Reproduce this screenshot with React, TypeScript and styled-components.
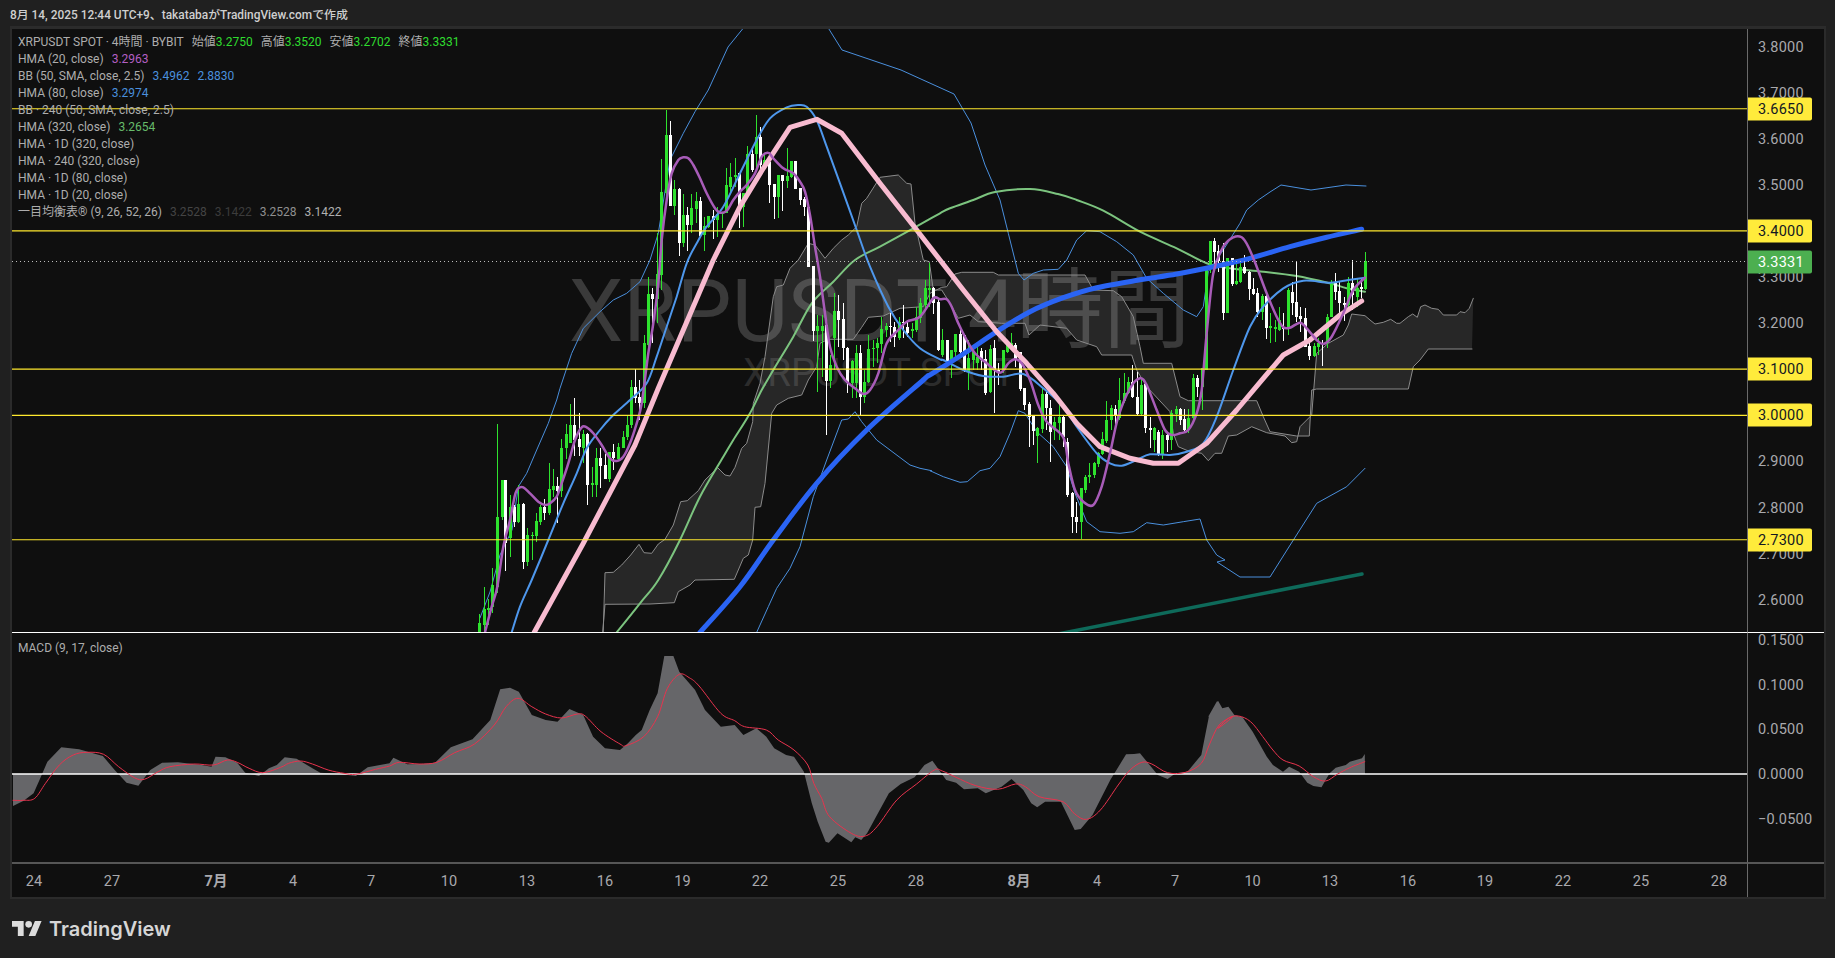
import styled, { createGlobalStyle } from "styled-components";

type Pt = [number, number];

const FONT = `Roboto, "Noto Sans CJK JP", sans-serif`;

const GlobalStyle = createGlobalStyle`
  html, body {
    margin: 0;
    padding: 0;
    background: #202020;
    font-family: ${FONT};
  }
`;

// traced off crops of the chart, so each block is in its crop's coordinates
const trace = (ox: number, oy: number, flat: number[], sx = 3, sy = 3): Pt[] => {
  const out: Pt[] = [];
  for (let i = 0; i < flat.length; i += 2) out.push([ox + flat[i] / sx, oy + flat[i + 1] / sy]);
  return out;
};
const A = (f: number[]) => trace(440, 380, f); // lower left crop
const B = (f: number[]) => trace(440, 90, f); // upper left crop
const C = (f: number[]) => trace(930, 200, f); // right crop
const D = (f: number[]) => trace(1340, 270, f); // cloud tail
const M1 = (f: number[]) => trace(0, 630, f, 2.529);
const M2 = (f: number[]) => trace(620, 630, f, 2.529);
const M3 = (f: number[]) => trace(1200, 600, f, 2.469);

const toPoints = (pts: Pt[]) => pts.map(([x, y]) => `${x.toFixed(1)},${y.toFixed(1)}`).join(" ");

// catmull-rom through the traced points
const toCurve = (pts: Pt[]) => {
  let d = `M${pts[0][0].toFixed(1)} ${pts[0][1].toFixed(1)}`;
  for (let i = 0; i < pts.length - 1; i++) {
    const p0 = pts[Math.max(i - 1, 0)];
    const p1 = pts[i];
    const p2 = pts[i + 1];
    const p3 = pts[Math.min(i + 2, pts.length - 1)];
    const c1x = p1[0] + (p2[0] - p0[0]) / 6;
    const c1y = p1[1] + (p2[1] - p0[1]) / 6;
    const c2x = p2[0] - (p3[0] - p1[0]) / 6;
    const c2y = p2[1] - (p3[1] - p1[1]) / 6;
    d += `C${c1x.toFixed(1)} ${c1y.toFixed(1)} ${c2x.toFixed(1)} ${c2y.toFixed(1)} ${p2[0].toFixed(1)} ${p2[1].toFixed(1)}`;
  }
  return d;
};

const priceY = (p: number) => 46.5 + (3.8 - p) * 461;
const macdY = (v: number) => 774 - v * 892;

const cloudUpper: Pt[] = [
  ...A([495, 578, 520, 577, 545, 555, 572, 525, 597, 493, 612, 518, 635, 520, 655, 492, 675, 478, 700, 435, 722, 365, 742, 362, 775, 332, 795, 300, 833, 263, 855, 285, 870, 288, 885, 262, 905, 205, 920, 190, 938, 125, 940, 70]),
  ...B([960, 880, 975, 800, 1000, 620, 1010, 590, 1030, 585, 1050, 535, 1075, 510, 1105, 460, 1125, 465, 1155, 505, 1180, 475, 1205, 450, 1225, 435, 1250, 410, 1265, 340, 1280, 325, 1320, 262, 1375, 255, 1400, 280, 1413, 282, 1425, 400, 1450, 510, 1468, 515]),
  ...C([0, 200, 10, 270, 35, 270, 60, 310, 85, 355, 120, 345, 145, 365, 215, 370, 285, 370, 297, 405, 330, 375, 410, 385, 440, 420, 500, 440, 515, 465, 605, 465, 620, 510, 650, 560, 720, 635, 730, 700, 745, 740, 780, 755, 815, 760, 835, 782, 855, 760, 875, 760, 895, 708, 920, 705, 965, 680, 1010, 698, 1065, 708, 1085, 728, 1100, 725, 1110, 680, 1145, 645, 1160, 460, 1195, 430, 1240, 405]),
  ...D([25, 165, 35, 132, 75, 137, 90, 150, 105, 162, 130, 157, 152, 148, 170, 160, 180, 160, 205, 140, 218, 132, 232, 142, 242, 110, 255, 105, 275, 115, 295, 118, 310, 135, 350, 135, 360, 125, 375, 128, 388, 115, 400, 85]),
];

const cloudLower: Pt[] = [
  ...A([495, 673, 630, 672, 703, 668, 715, 635, 750, 615, 765, 600, 883, 598, 910, 535, 925, 525, 938, 480, 945, 382, 962, 380, 975, 310, 995, 100, 1010, 75, 1045, 55, 1085, 45, 1105, 0]),
  ...B([1130, 830, 1140, 760, 1165, 748, 1240, 748, 1265, 712, 1285, 682, 1330, 678, 1380, 655, 1450, 650, 1470, 610]),
  ...C([35, 262, 50, 260, 75, 222, 95, 217, 190, 217, 205, 225, 465, 225, 490, 270, 550, 272, 575, 290, 610, 350, 630, 440, 640, 490, 725, 490, 750, 590, 775, 602, 980, 602, 1000, 650, 1020, 695, 1100, 708, 1138, 708, 1145, 570, 1160, 567, 1435, 567, 1450, 500, 1470, 480, 1495, 447, 1626, 447]),
];

const hma20: Pt[] = [
  ...A([135, 757, 155, 680, 172, 620, 190, 500, 210, 420, 225, 345, 235, 325, 250, 322, 270, 340, 295, 365, 315, 375, 330, 370, 350, 350, 365, 310, 385, 250, 405, 180, 425, 142, 440, 142, 460, 160, 485, 195, 510, 235, 530, 243, 550, 230, 570, 190, 590, 130, 605, 70]),
  ...B([625, 790, 640, 700, 655, 580, 665, 450, 680, 330, 695, 250, 715, 210, 730, 202, 745, 205, 760, 225, 780, 265, 800, 310, 825, 355, 840, 368, 860, 362, 880, 330, 900, 305, 920, 285, 945, 250, 965, 200, 985, 188, 1000, 205, 1030, 235, 1060, 250, 1080, 275, 1095, 305, 1110, 375, 1125, 470, 1140, 560, 1155, 670, 1170, 770, 1190, 830, 1215, 870, 1245, 895, 1270, 912, 1290, 900, 1315, 850, 1340, 760, 1375, 720, 1400, 695, 1440, 680, 1480, 625]),
  ...C([30, 298, 50, 298, 65, 320, 85, 370, 110, 420, 135, 460, 170, 490, 210, 518, 235, 490, 255, 478, 275, 490, 300, 540, 325, 615, 350, 665, 400, 712, 415, 790, 435, 870, 460, 905, 490, 915, 515, 860, 540, 760, 565, 650, 600, 565, 630, 535, 650, 555, 680, 630, 705, 690, 725, 705, 750, 700, 775, 690, 800, 640, 815, 570, 830, 400, 850, 220, 880, 140, 910, 112, 935, 112, 955, 140, 980, 200, 1010, 280, 1040, 350, 1060, 382, 1080, 383, 1110, 368, 1130, 385, 1160, 420, 1180, 432, 1205, 410, 1240, 340, 1270, 270, 1305, 233]),
];

const hma80: Pt[] = [
  ...A([215, 757, 240, 680, 275, 600, 325, 480, 370, 370, 410, 280, 440, 205, 480, 150, 520, 105, 570, 60]),
  ...B([620, 880, 650, 800, 680, 710, 710, 620, 740, 520, 770, 460, 800, 410, 850, 350, 900, 250, 950, 150, 990, 85, 1040, 52, 1075, 45, 1100, 50, 1130, 90, 1160, 170, 1200, 280, 1250, 420, 1290, 530, 1345, 650, 1390, 720, 1440, 775, 1500, 808]),
  ...C([40, 480, 100, 510, 160, 528, 220, 530, 280, 522, 340, 565, 400, 620, 440, 680, 500, 760, 540, 790, 575, 797, 620, 780, 660, 763, 720, 765, 770, 755, 820, 730, 860, 650, 910, 510, 960, 380, 1000, 320, 1060, 265, 1120, 242, 1200, 248, 1255, 240, 1305, 233]),
];

const hma320: Pt[] = [
  ...A([530, 757, 600, 670, 655, 600, 720, 480, 780, 350, 850, 230, 880, 180, 930, 100]),
  ...B([965, 900, 1000, 840, 1060, 740, 1115, 640, 1180, 575, 1245, 510, 1320, 470, 1420, 415, 1500, 370]),
  ...C([60, 25, 130, 0]),
  [995, 192], [1030, 189], [1058, 194],
  ...C([440, 0, 520, 32, 630, 95, 740, 145, 830, 190, 900, 205, 1000, 215, 1100, 228, 1200, 250, 1250, 265, 1305, 275]),
];

const dailyBlue: Pt[] = [
  ...A([780, 757, 900, 620, 1000, 480, 1130, 310, 1280, 150, 1450, 0]),
  ...C([0, 525, 100, 462, 200, 395, 300, 335, 400, 293, 500, 263, 640, 238, 740, 222, 850, 200, 960, 175, 1080, 140, 1190, 112, 1295, 88]),
];

const dailyPink: Pt[] = [
  ...A([283, 757, 430, 490, 585, 195]),
  ...B([655, 895, 820, 510, 900, 350, 970, 235, 1050, 112, 1130, 88, 1205, 130, 1320, 280, 1430, 420]),
  ...C([30, 180, 100, 270, 200, 395, 290, 490, 370, 580, 440, 670, 510, 740, 600, 775, 670, 790, 745, 790, 830, 730, 920, 630, 1000, 535, 1060, 465, 1140, 420, 1230, 345, 1295, 303]),
];

const bandUpper: Pt[] = [
  [480, 618], [490, 592], [500, 555], [512, 530],
  ...A([235, 320, 260, 280, 290, 210, 325, 130, 350, 60]),
  ...B([360, 895, 395, 790, 430, 715, 480, 665, 520, 630, 560, 610, 600, 575, 630, 510, 655, 430, 690, 210, 730, 130, 765, 65, 805, 0]),
  [728, 47], [745, 26],
];

const bandUpperRight: Pt[] = [
  [827, 26], [842, 50], [901, 70], [954, 94], [971, 123], [985, 165],
  ...C([210, 0, 235, 100, 265, 220, 282, 240, 310, 220, 340, 210, 385, 208, 410, 180, 440, 120, 470, 92, 510, 95, 560, 125, 610, 165, 650, 235, 700, 280, 760, 330, 800, 350, 820, 320, 835, 215, 880, 150, 930, 70, 950, 30, 985, 0]),
  [1270, 192], [1281, 185], [1311, 190], [1346, 185], [1366, 186],
];

const bandLower: Pt[] = [
  ...A([950, 757, 985, 680, 1010, 625, 1050, 565, 1080, 500, 1120, 350, 1160, 240, 1205, 120, 1225, 117, 1245, 95, 1265, 125, 1310, 180, 1350, 210, 1410, 255, 1440, 265, 1475, 272]),
  ...C([0, 812, 40, 830, 90, 847, 112, 845, 150, 812, 180, 805, 210, 770, 240, 700, 265, 632, 285, 640, 320, 695, 370, 740, 410, 800, 435, 880, 470, 965, 510, 995, 570, 1000, 610, 995, 650, 968, 700, 975, 760, 965, 810, 957, 830, 1020, 860, 1065, 885, 1080]),
  [1217, 562], [1240, 577], [1270, 577], [1287, 550],
  ...C([1160, 910, 1250, 860, 1305, 805]),
];

const macdArea: Pt[] = [
  ...M1([33, 528, 60, 512, 85, 490, 100, 450, 120, 395, 155, 352, 200, 358, 260, 378, 290, 420, 320, 458, 350, 467, 380, 420, 410, 398, 450, 397, 510, 405, 535, 410, 545, 380, 570, 382, 600, 398, 620, 428, 655, 438, 680, 415, 700, 405, 720, 382, 750, 386, 790, 415, 810, 428, 860, 432, 900, 438, 930, 412, 985, 400, 995, 383, 1030, 403, 1065, 402, 1100, 398, 1140, 352, 1195, 328, 1240, 270, 1265, 178, 1290, 173, 1312, 185, 1345, 255, 1380, 270, 1410, 275, 1440, 237, 1475, 255, 1500, 320, 1530, 355, 1568, 360]),
  ...M2([20, 340, 40, 315, 55, 300, 75, 240, 95, 190, 112, 78, 135, 78, 150, 125, 190, 180, 215, 240, 255, 290, 290, 285, 312, 315, 345, 295, 370, 320, 390, 355, 420, 375, 440, 380, 465, 425, 485, 520, 500, 575, 520, 635, 528, 638, 550, 610, 585, 637, 595, 622, 610, 630, 625, 610, 650, 555, 680, 490, 710, 462, 745, 442, 770, 405, 790, 392, 825, 450, 850, 458, 870, 478, 905, 475, 925, 490, 965, 470, 990, 447, 1020, 480, 1040, 520, 1055, 532, 1075, 515, 1115, 515, 1150, 600, 1165, 597, 1195, 555, 1240, 450, 1280, 373, 1300, 372, 1315, 370, 1360, 435, 1385, 447, 1405, 430, 1435, 425, 1470, 375, 1490, 255, 1510, 213, 1525, 238]),
  ...M3([20, 350, 45, 303, 55, 325, 70, 320, 85, 345, 105, 352, 130, 395, 165, 470, 180, 495, 205, 515, 220, 500, 245, 515, 265, 548, 280, 558, 300, 562, 320, 520, 335, 503, 360, 495, 370, 485, 400, 475, 407, 462]),
];

const macdSignal: Pt[] = [
  ...M1([33, 511, 60, 511, 88, 505, 115, 460, 150, 405, 185, 375, 220, 367, 262, 373, 300, 410, 340, 443, 365, 448, 400, 425, 430, 410, 490, 402, 540, 405, 575, 390, 600, 397, 630, 415, 665, 428, 710, 412, 730, 400, 760, 393, 790, 402, 830, 420, 870, 430, 900, 433, 950, 418, 985, 408, 1010, 397, 1060, 402, 1105, 397, 1150, 368, 1200, 342, 1250, 285, 1280, 230, 1310, 205, 1345, 230, 1380, 252, 1420, 264, 1460, 252, 1480, 258, 1520, 305, 1568, 342]),
  ...M2([15, 347, 60, 320, 95, 260, 120, 175, 150, 133, 175, 143, 200, 168, 255, 250, 290, 272, 315, 290, 370, 300, 400, 330, 440, 360, 475, 405, 490, 460, 510, 505, 530, 560, 585, 610, 620, 618, 650, 590, 700, 510, 750, 462, 795, 420, 815, 423, 850, 442, 900, 467, 955, 478, 1000, 462, 1025, 470, 1060, 500, 1120, 515, 1150, 552, 1180, 568, 1215, 540, 1260, 465, 1290, 420, 1320, 397, 1345, 402, 1385, 428, 1430, 427, 1470, 400, 1490, 345, 1515, 285, 1550, 260]),
  ...M3([45, 385, 70, 355, 95, 348, 125, 365, 155, 410, 180, 450, 205, 480, 245, 498, 280, 530, 310, 543, 340, 522, 370, 503, 407, 485]),
];

const G = 1;
const W = 0;

// x, wick top, body top, body bottom, wick bottom, up
const candlesA = [
  [118, 702, 730, 770, 770, G], [133, 622, 688, 735, 770, G], [145, 657, 685, 690, 735, G], [157, 565, 615, 680, 700, G],
  [172, 132, 412, 620, 640, G], [185, 300, 300, 412, 420, G], [196, 300, 300, 490, 572, W], [210, 345, 380, 475, 530, G],
  [222, 375, 380, 425, 440, W], [235, 316, 372, 425, 430, G], [250, 370, 372, 545, 568, W], [262, 445, 465, 545, 557, G],
  [275, 455, 466, 469, 540, G], [288, 400, 423, 468, 485, G], [301, 375, 381, 425, 435, G], [313, 358, 381, 398, 420, W],
  [328, 250, 328, 398, 405, G], [340, 268, 318, 330, 352, G], [352, 292, 318, 332, 430, W], [364, 178, 205, 332, 350, G],
  [378, 133, 162, 205, 238, G], [390, 72, 135, 190, 190, G], [403, 55, 135, 180, 228, W], [417, 100, 178, 202, 228, W],
  [430, 150, 162, 205, 250, G], [442, 160, 162, 315, 375, W], [457, 262, 310, 315, 350, G], [468, 205, 235, 315, 350, G],
  [481, 205, 235, 258, 323, W], [496, 222, 255, 298, 298, W], [508, 215, 215, 298, 305, G], [520, 192, 215, 235, 270, W],
  [535, 190, 200, 238, 240, G], [548, 153, 170, 205, 205, G], [560, 105, 135, 172, 180, G], [574, 0, 22, 135, 145, G],
  [586, -32, 22, 55, 70, W], [598, 0, 52, 70, 120, W], [612, -135, -110, 70, 85, G],
];

const candlesB = [
  [625, 562, 612, 765, 780, G], [637, 595, 612, 628, 760, W], [652, 430, 552, 628, 700, G], [664, 208, 305, 555, 600, G],
  [677, 60, 135, 310, 330, G], [689, 92, 135, 347, 347, W], [703, 270, 298, 347, 375, G], [716, 295, 298, 458, 497, W],
  [728, 312, 375, 458, 470, G], [742, 350, 375, 405, 482, W], [754, 312, 353, 405, 430, G], [767, 305, 333, 358, 400, G],
  [780, 322, 333, 437, 437, W], [793, 380, 408, 435, 483, G], [805, 378, 378, 412, 415, G], [820, 360, 378, 390, 447, W],
  [832, 350, 372, 390, 440, G], [845, 365, 370, 373, 415, G], [858, 235, 285, 368, 370, G], [871, 220, 260, 290, 308, G],
  [884, 205, 255, 262, 290, G], [898, 250, 250, 350, 415, W], [910, 310, 310, 350, 412, G], [922, 168, 192, 315, 320, G],
  [937, 178, 192, 240, 245, W], [948, 75, 140, 192, 235, G], [960, 110, 140, 225, 240, W], [973, 190, 210, 225, 240, G],
  [987, 190, 215, 285, 338, W], [1001, 282, 282, 320, 388, W], [1013, 255, 255, 320, 385, G], [1027, 255, 255, 272, 362, W],
  [1040, 175, 258, 272, 295, G], [1052, 212, 212, 262, 265, G], [1066, 212, 212, 297, 297, W], [1079, 295, 295, 330, 345, W],
  [1091, 320, 328, 352, 378, W], [1105, 350, 350, 530, 530, W], [1118, 528, 528, 722, 752, W], [1131, 675, 708, 722, 906, G],
  [1145, 675, 708, 722, 860, G], [1157, 700, 705, 872, 1034, W], [1170, 795, 825, 872, 895, G], [1183, 610, 662, 745, 840, G],
  [1195, 615, 662, 690, 770, W], [1208, 640, 688, 775, 810, W], [1222, 770, 775, 880, 910, W], [1235, 810, 812, 880, 923, G],
  [1247, 765, 790, 880, 925, G], [1261, 765, 790, 920, 975, W], [1273, 840, 875, 922, 938, G], [1285, 735, 778, 875, 880, G],
  [1298, 750, 773, 778, 830, G], [1310, 745, 760, 775, 820, G], [1324, 680, 717, 762, 790, G], [1337, 700, 708, 720, 740, G],
  [1351, 670, 708, 710, 755, W], [1363, 695, 710, 740, 770, W], [1376, 680, 695, 745, 750, G], [1389, 645, 695, 700, 745, W],
  [1402, 690, 710, 730, 740, W], [1415, 700, 718, 722, 745, G], [1428, 650, 680, 720, 725, G], [1441, 625, 640, 685, 700, G],
  [1454, 570, 595, 645, 660, G], [1467, 520, 595, 600, 650, G], [1480, 592, 595, 640, 672, W], [1493, 630, 635, 780, 782, W],
];

const candlesC = [
  [37, 388, 420, 465, 470, G], [50, 420, 420, 490, 495, W], [63, 450, 450, 490, 535, G], [76, 402, 402, 455, 480, G],
  [89, 388, 402, 455, 470, W], [102, 405, 405, 510, 515, W], [115, 420, 475, 515, 570, G], [128, 455, 455, 480, 510, G],
  [140, 438, 470, 490, 510, G], [152, 445, 452, 480, 510, W], [166, 450, 478, 578, 585, W], [179, 435, 448, 575, 580, G],
  [192, 420, 445, 510, 640, W], [205, 490, 510, 515, 555, W], [218, 450, 450, 510, 520, G], [230, 430, 430, 455, 460, G],
  [243, 398, 430, 440, 450, G], [256, 430, 435, 478, 500, W], [270, 455, 455, 568, 572, W], [283, 565, 565, 615, 630, W],
  [296, 605, 612, 650, 742, W], [308, 648, 648, 692, 735, W], [322, 680, 685, 708, 790, G], [335, 560, 582, 688, 700, G],
  [347, 575, 582, 625, 690, W], [361, 600, 625, 697, 785, W], [373, 650, 665, 690, 720, G], [386, 615, 652, 668, 720, G],
  [400, 645, 652, 712, 740, W], [412, 715, 725, 885, 890, W], [425, 875, 880, 950, 1000, W], [438, 905, 950, 965, 1000, W],
  [452, 865, 865, 965, 1018, G], [465, 825, 830, 870, 880, G], [478, 790, 825, 830, 850, G], [491, 785, 790, 825, 835, G],
  [503, 755, 760, 792, 800, G], [516, 695, 717, 762, 765, G], [529, 602, 660, 722, 730, G], [542, 615, 625, 660, 690, G],
  [555, 615, 628, 648, 675, W], [568, 535, 600, 655, 660, G], [581, 520, 578, 602, 610, G], [593, 530, 545, 580, 582, G],
  [606, 495, 545, 592, 595, W], [620, 515, 592, 642, 645, W], [632, 535, 555, 642, 645, G], [645, 550, 552, 685, 700, W],
  [659, 652, 685, 690, 745, W], [672, 680, 685, 720, 755, G], [685, 690, 695, 765, 768, W], [697, 690, 705, 765, 778, G],
  [710, 695, 705, 720, 755, W], [724, 630, 640, 720, 750, G], [737, 618, 628, 642, 665, G], [749, 625, 628, 660, 675, W],
  [761, 628, 658, 690, 692, W], [775, 628, 655, 690, 700, G], [788, 522, 533, 655, 660, G], [800, 525, 533, 560, 590, W],
  [815, 505, 505, 560, 630, G], [827, 200, 200, 510, 510, G], [839, 123, 123, 205, 220, G], [853, 115, 123, 155, 205, W],
  [865, 135, 152, 182, 215, W], [878, 128, 182, 340, 360, W], [892, 175, 175, 338, 340, G], [905, 175, 175, 252, 258, W],
  [918, 190, 243, 252, 255, G], [931, 180, 200, 245, 248, G], [943, 165, 200, 220, 222, W], [956, 212, 215, 268, 300, W],
  [969, 235, 268, 282, 285, W], [982, 265, 280, 335, 350, W], [995, 282, 288, 335, 360, G], [1008, 282, 288, 385, 418, W],
  [1021, 340, 378, 385, 430, G], [1034, 360, 380, 388, 425, G], [1047, 320, 360, 390, 392, G], [1060, 340, 385, 388, 422, W],
  [1073, 265, 270, 382, 405, G], [1085, 245, 275, 310, 345, W], [1098, 185, 307, 350, 365, W], [1111, 320, 348, 358, 395, W],
  [1124, 325, 355, 440, 442, W], [1138, 410, 438, 468, 480, W], [1151, 430, 438, 468, 470, G], [1164, 415, 428, 440, 465, G],
  [1177, 420, 428, 432, 498, W], [1190, 342, 350, 430, 445, G], [1203, 240, 245, 350, 352, G], [1216, 220, 245, 275, 300, W],
  [1228, 245, 272, 310, 345, W], [1241, 290, 308, 315, 362, W], [1254, 232, 250, 315, 325, G], [1267, 180, 250, 285, 330, W],
  [1280, 235, 265, 290, 320, G], [1293, 235, 262, 266, 295, W], [1306, 157, 183, 268, 270, G],
];

const toCandles = (rows: number[][], ox: number, oy: number) =>
  rows.map(([x, wt, bt, bb, wb, up]) => ({
    x: Math.round(ox + x / 3),
    wickTop: oy + wt / 3,
    bodyTop: oy + bt / 3,
    bodyBottom: oy + bb / 3,
    wickBottom: oy + wb / 3,
    up: up === G,
  }));

const candles = [...toCandles(candlesA, 440, 380), ...toCandles(candlesB, 440, 90), ...toCandles(candlesC, 930, 200)];

const levels = [3.665, 3.4, 3.1, 3.0, 2.73];

const priceTicks = ["3.8000", "3.7000", "3.6000", "3.5000", "3.3000", "3.2000", "2.9000", "2.8000", "2.7000", "2.6000"];

const macdTicks = [0.15, 0.1, 0.05, 0, -0.05];

const timeTicks: [string, number, boolean?][] = [
  ["24", 34], ["27", 112], ["7月", 216, true], ["4", 293], ["7", 371], ["10", 449], ["13", 527], ["16", 605],
  ["19", 682.5], ["22", 760], ["25", 838], ["28", 916], ["8月", 1019, true], ["4", 1097], ["7", 1175], ["10", 1252.6],
  ["13", 1330], ["16", 1408], ["19", 1485], ["22", 1563], ["25", 1641], ["28", 1719],
];

const Page = styled.div`
  width: 1835px;
  height: 958px;
  display: flex;
  flex-direction: column;
  background: #202020;
  overflow: hidden;
`;

const Caption = styled.div`
  height: 26px;
  padding-left: 10px;
  display: flex;
  align-items: center;
  font-size: 11.9px;
  font-weight: 500;
  color: #cfcfcf;
  white-space: nowrap;
`;

const Frame = styled.div`
  width: 1816px;
  height: 873px;
  margin-left: 10px;
  box-sizing: border-box;
  border: 2px solid #2b2b2b;
  border-top-width: 3px;
  background: #0f0f0f;
  display: grid;
  grid-template-columns: 1735px 1fr;
  grid-template-rows: 604px 230px 1fr;
`;

const Plot = styled.div<{ $divider?: string }>`
  position: relative;
  overflow: hidden;
  border-bottom: 1.5px solid ${({ $divider }) => $divider};
`;

const ChartSvg = styled.svg`
  position: absolute;
  inset: 0;
  width: 100%;
  height: 100%;
  display: block;
`;

const Axis = styled.div<{ $divider?: string }>`
  position: relative;
  border-left: 1px solid #6a6a6a;
  border-bottom: 1.5px solid ${({ $divider }) => $divider};
`;

const AxisLabel = styled.div`
  position: absolute;
  left: 10px;
  transform: translateY(-50%);
  font-size: 14.5px;
  color: #a9a9ad;
  letter-spacing: 0.2px;
`;

const PriceChip = styled.div<{ $bg: string; $fg: string }>`
  position: absolute;
  left: 0;
  width: 64px;
  height: 23px;
  padding-left: 10px;
  box-sizing: border-box;
  display: flex;
  align-items: center;
  transform: translateY(-50%);
  border-radius: 0 2px 2px 0;
  background: ${({ $bg }) => $bg};
  color: ${({ $fg }) => $fg};
  font-size: 14.5px;
  letter-spacing: 0.2px;
`;

const Watermark = styled.div`
  position: absolute;
  inset: 0;
  display: flex;
  flex-direction: column;
  align-items: center;
  justify-content: center;
  white-space: nowrap;
`;

const WatermarkTitle = styled.div`
  font-size: 87px;
  line-height: 84px;
  color: #3a3a3a;
`;

const WatermarkSub = styled.div`
  font-size: 38.5px;
  line-height: 40px;
  color: #2c2c2c;
`;

const Legend = styled.div<{ $top: number }>`
  position: absolute;
  left: 6px;
  top: ${({ $top }) => $top}px;
  display: flex;
  flex-direction: column;
  font-size: 12px;
  line-height: 17px;
  color: #adadad;
  white-space: nowrap;
`;

const LegendRow = styled.div`
  display: flex;
  gap: 8px;
`;

const LegendValue = styled.span<{ $color: string }>`
  color: ${({ $color }) => $color};
`;

const TimeAxis = styled.div`
  position: relative;
  border-top: 1px solid #565656;
`;

const TimeLabel = styled.div<{ $major?: boolean }>`
  position: absolute;
  top: 9px;
  transform: translateX(-50%);
  font-size: 14.5px;
  line-height: 17px;
  font-weight: ${({ $major }) => ($major ? 700 : 400)};
  color: #a9a9ad;
`;

const AxisCorner = styled.div`
  border-left: 1px solid #6a6a6a;
  border-top: 1px solid #565656;
`;

const Brand = styled.div`
  display: flex;
  align-items: center;
  gap: 7px;
  height: 59px;
  padding-left: 12px;
  font-family: Inter, sans-serif;
  font-size: 20px;
  font-weight: 600;
  color: #d6d6d6;
`;

const GREEN = "#2ee22e";
const GREEN_TEXT = "#2fdc2f";
const GRAY_BODY = "#666669";

const Candles = () => (
  <g shapeRendering="crispEdges">
    {candles.map((c, i) => {
      const color = c.up ? GREEN : "#ffffff";
      return (
        <g key={i} fill={color}>
          <rect x={c.x} y={c.wickTop} width={1} height={Math.max(c.wickBottom - c.wickTop, 1)} />
          <rect x={c.x - 1} y={c.bodyTop} width={3} height={Math.max(c.bodyBottom - c.bodyTop, 1)} />
        </g>
      );
    })}
  </g>
);

const Line = ({ pts, color, width }: { pts: Pt[]; color: string; width: number }) => (
  <polyline points={toPoints(pts)} fill="none" stroke={color} strokeWidth={width} strokeLinejoin="round" strokeLinecap="round" />
);

const Curve = ({ pts, color, width }: { pts: Pt[]; color: string; width: number }) => (
  <path d={toCurve(pts)} fill="none" stroke={color} strokeWidth={width} strokeLinejoin="round" strokeLinecap="round" />
);

const MainChart = () => (
  <ChartSvg viewBox="12 29 1735 603">
    <polygon points={toPoints([...cloudUpper, ...[...cloudLower].reverse()])} fill="#ffffff" fillOpacity={0.1} fillRule="evenodd" />
    <Line pts={[[603, 640], ...cloudUpper]} color="#8b8b8b" width={1} />
    <Line pts={[[602, 640], ...cloudLower]} color="#8b8b8b" width={1} />
    <Line pts={bandUpper} color="#4a8fdd" width={1} />
    <Line pts={bandUpperRight} color="#4a8fdd" width={1} />
    <Line pts={bandLower} color="#4a8fdd" width={1} />
    <Line pts={[[1058, 634], [1362, 574]]} color="#0e6a5a" width={3.5} />
    <Curve pts={hma320} color="#7cc47f" width={2} />
    <Candles />
    <Curve pts={hma80} color="#4e97ec" width={2} />
    <Curve pts={dailyBlue} color="#2a64f4" width={5} />
    <Line pts={dailyPink} color="#f8bbd0" width={5} />
    <Curve pts={hma20} color="#a85cb8" width={2.5} />
    {levels.map((p) => (
      <line key={p} x1={12} x2={1747} y1={priceY(p)} y2={priceY(p)} stroke="#ffe92e" strokeWidth={1.2} />
    ))}
    <line x1={12} x2={1747} y1={261.5} y2={261.5} stroke="#bdbdbd" strokeWidth={1} strokeDasharray="1 3" />
  </ChartSvg>
);

const MacdChart = () => (
  <ChartSvg viewBox="12 633 1735 229">
    <polygon points={toPoints([[13, 774], ...macdArea, [1365, 774]])} fill={GRAY_BODY} />
    <line x1={12} x2={1747} y1={774} y2={774} stroke="#ffffff" strokeWidth={1.5} />
    <Curve pts={macdSignal} color="#e8334e" width={1} />
  </ChartSvg>
);

const Logo = () => (
  <svg width="30" height="15" viewBox="0 4 36 18" fill="#dcdcdc">
    <path d="M14 22H7V11H0V4h14v18zM28 22h-8l7.5-18h8L28 22z" />
    <circle cx="20" cy="8" r="4" />
  </svg>
);

export default function App() {
  return (
    <Page>
      <GlobalStyle />
      <Caption>8月 14, 2025 12:44 UTC+9、takatabaがTradingView.comで作成</Caption>
      <Frame>
        <Plot $divider="#ffffff">
          <Watermark>
            <WatermarkTitle>XRPUSDT 4時間</WatermarkTitle>
            <WatermarkSub>XRPUSDT SPOT</WatermarkSub>
          </Watermark>
          <MainChart />
          <Legend $top={5}>
            <LegendRow>
              <span>XRPUSDT SPOT · 4時間 · BYBIT</span>
              <span>始値<LegendValue $color={GREEN_TEXT}>3.2750</LegendValue></span>
              <span>高値<LegendValue $color={GREEN_TEXT}>3.3520</LegendValue></span>
              <span>安値<LegendValue $color={GREEN_TEXT}>3.2702</LegendValue></span>
              <span>終値<LegendValue $color={GREEN_TEXT}>3.3331</LegendValue></span>
            </LegendRow>
            <LegendRow>
              <span>HMA (20, close)</span>
              <LegendValue $color="#b45fc4">3.2963</LegendValue>
            </LegendRow>
            <LegendRow>
              <span>BB (50, SMA, close, 2.5)</span>
              <LegendValue $color="#4a8fdd">3.4962</LegendValue>
              <LegendValue $color="#4a8fdd">2.8830</LegendValue>
            </LegendRow>
            <LegendRow>
              <span>HMA (80, close)</span>
              <LegendValue $color="#4a8fdd">3.2974</LegendValue>
            </LegendRow>
            <LegendRow><span>BB · 240 (50, SMA, close, 2.5)</span></LegendRow>
            <LegendRow>
              <span>HMA (320, close)</span>
              <LegendValue $color="#66bb6a">3.2654</LegendValue>
            </LegendRow>
            <LegendRow><span>HMA · 1D (320, close)</span></LegendRow>
            <LegendRow><span>HMA · 240 (320, close)</span></LegendRow>
            <LegendRow><span>HMA · 1D (80, close)</span></LegendRow>
            <LegendRow><span>HMA · 1D (20, close)</span></LegendRow>
            <LegendRow>
              <span>一目均衡表® (9, 26, 52, 26)</span>
              <LegendValue $color="#444444">3.2528</LegendValue>
              <LegendValue $color="#3c3c3c">3.1422</LegendValue>
              <LegendValue $color="#8f8f8f">3.2528</LegendValue>
              <LegendValue $color="#b0b0b0">3.1422</LegendValue>
            </LegendRow>
          </Legend>
        </Plot>
        <Axis $divider="#ffffff">
          {priceTicks.map((t) => (
            <AxisLabel key={t} style={{ top: priceY(Number(t)) - 29 }}>{t}</AxisLabel>
          ))}
          {levels.map((p) => (
            <PriceChip key={p} $bg="#ffeb3b" $fg="#131722" style={{ top: priceY(p) - 29 }}>{p.toFixed(4)}</PriceChip>
          ))}
          <PriceChip $bg="#4caf50" $fg="#ffffff" style={{ top: priceY(3.3331) - 29 }}>3.3331</PriceChip>
        </Axis>
        <Plot $divider="#565656">
          <MacdChart />
          <Legend $top={7}>
            <LegendRow><span>MACD (9, 17, close)</span></LegendRow>
          </Legend>
        </Plot>
        <Axis $divider="#565656">
          {macdTicks.map((v) => (
            <AxisLabel key={v} style={{ top: macdY(v) - 633 }}>
              {v < 0 ? "−" : ""}{Math.abs(v).toFixed(4)}
            </AxisLabel>
          ))}
        </Axis>
        <TimeAxis>
          {timeTicks.map(([label, x, major]) => (
            <TimeLabel key={`${label}-${x}`} $major={major} style={{ left: x - 12 }}>{label}</TimeLabel>
          ))}
        </TimeAxis>
        <AxisCorner />
      </Frame>
      <Brand>
        <Logo />
        TradingView
      </Brand>
    </Page>
  );
}
